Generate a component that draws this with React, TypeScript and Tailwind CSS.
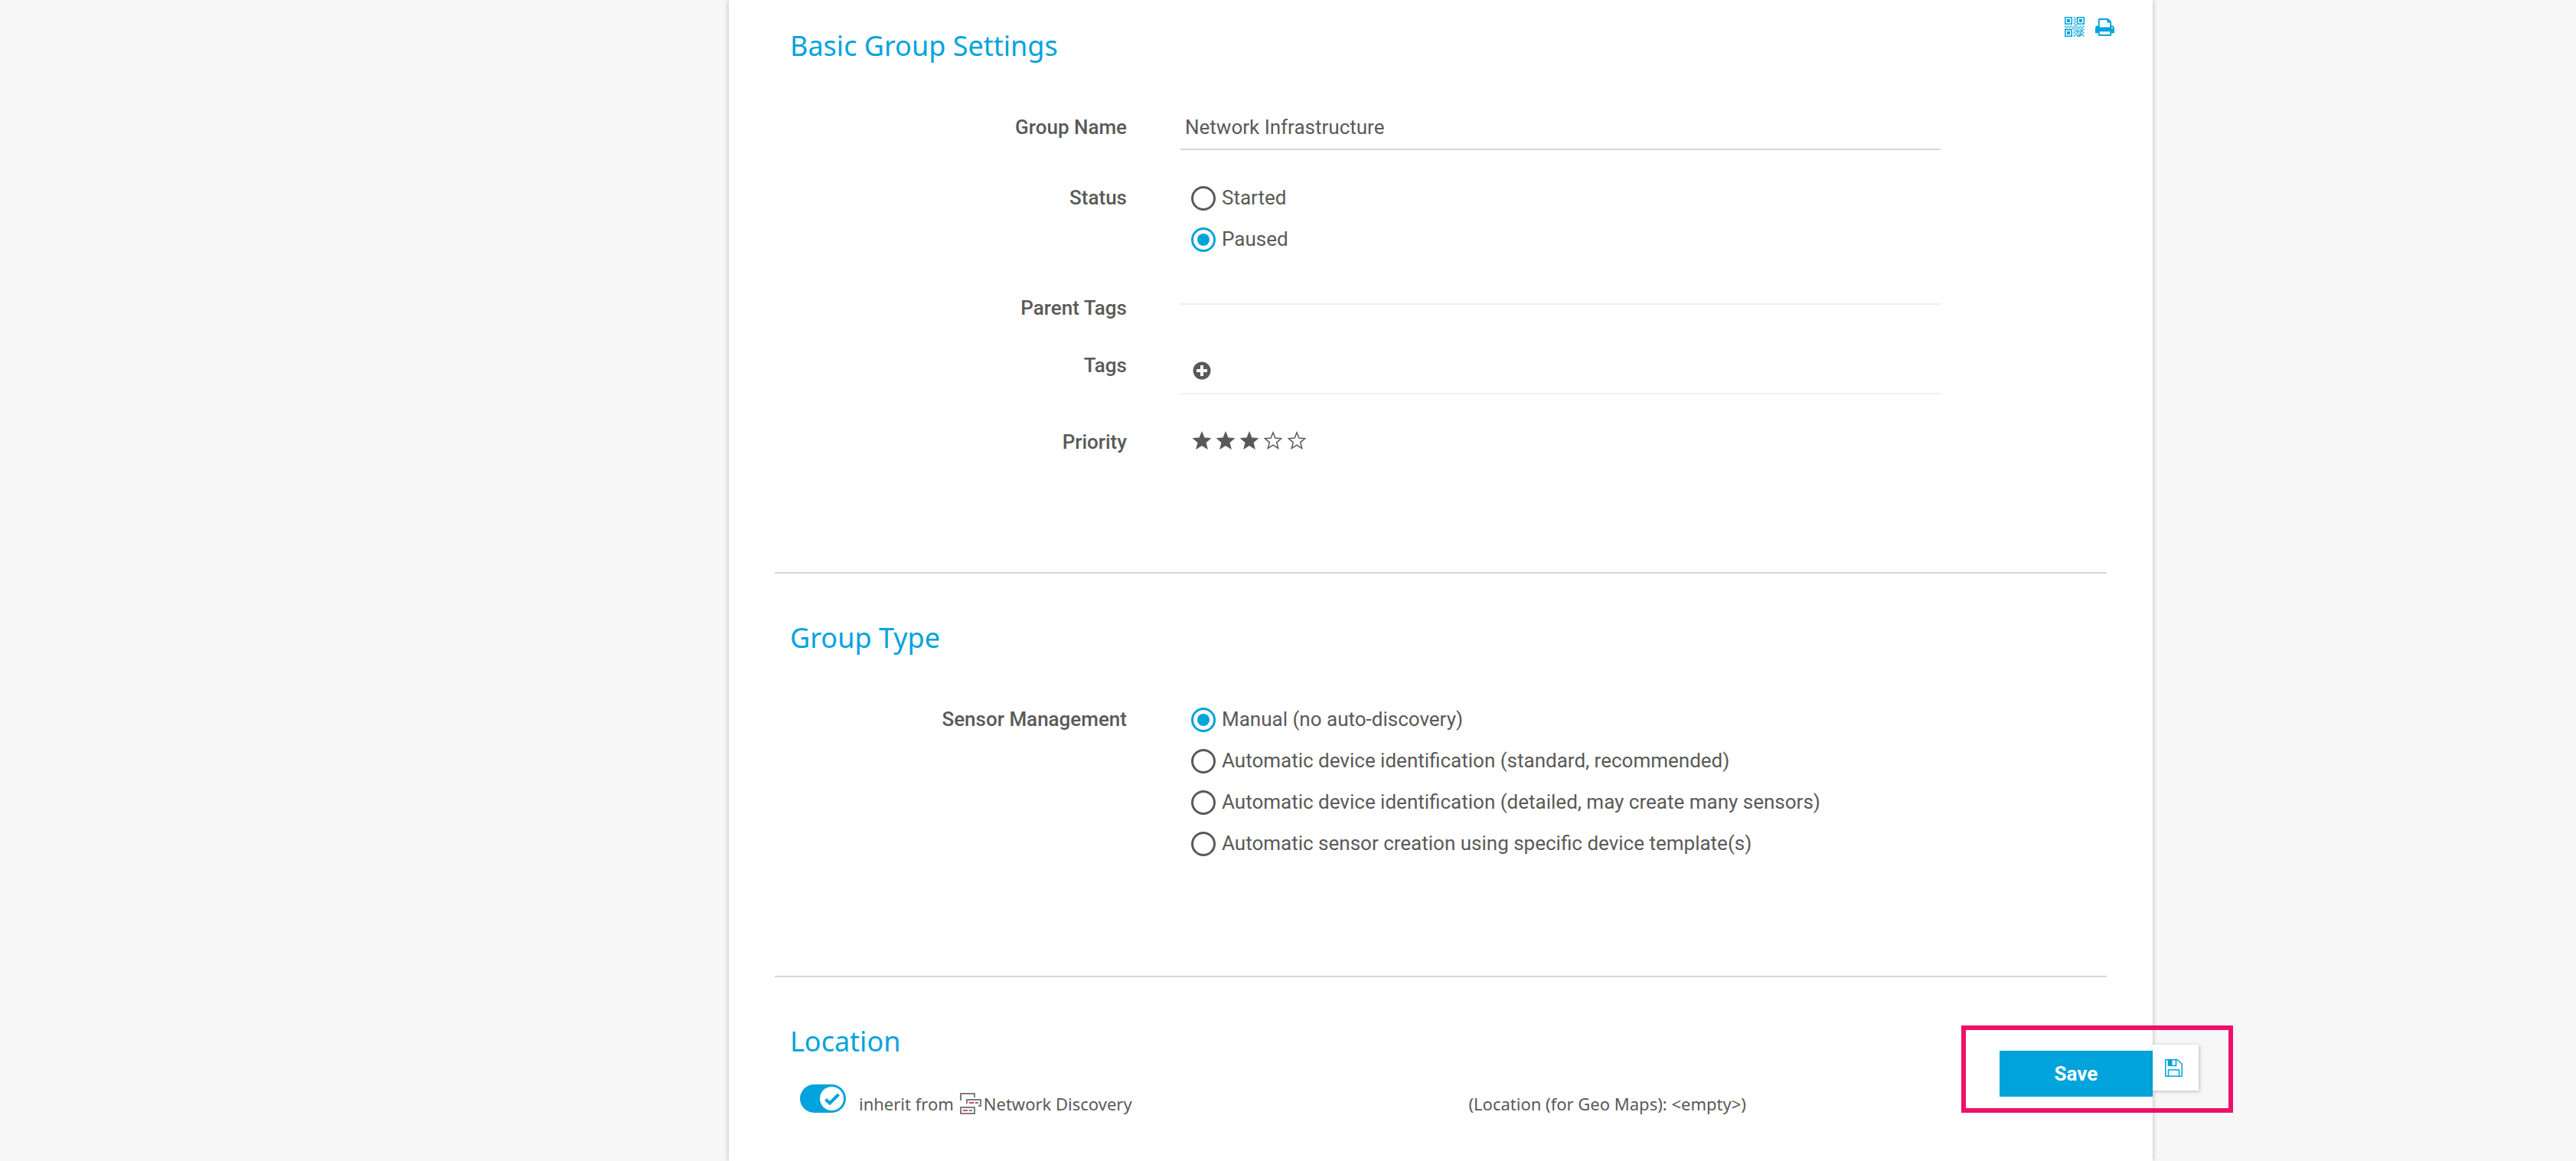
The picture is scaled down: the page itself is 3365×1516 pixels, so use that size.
import { ReactNode, useState } from "react";

function QrIcon() {
  const finders = [
    [0, 0],
    [16, 0],
    [0, 16],
  ];
  const dots: [number, number][] = [];
  for (let y = 0; y < 13; y++) {
    for (let x = 0; x < 13; x++) {
      const column = x > 5 && x < 8 && y < 6;
      const band = y > 5 && y < 8 && x < 13;
      const block = x > 5 && y > 7;
      if ((column || band || block) && (x + y) % 2 === 0) dots.push([x, y]);
    }
  }
  return (
    <svg viewBox="0 0 26 26" className="size-[26px]" aria-hidden="true">
      {finders.map(([x, y]) => (
        <g key={`${x}-${y}`}>
          <rect x={x + 0.75} y={y + 0.75} width="8.5" height="8.5" fill="none" stroke="currentColor" strokeWidth="1.5" />
          <rect x={x + 3} y={y + 3} width="4" height="4" fill="currentColor" />
        </g>
      ))}
      {dots.map(([x, y]) => (
        <rect key={`${x}-${y}`} x={x * 2 - 0.5} y={y * 2 - 0.5} width="2" height="2" fill="currentColor" opacity="0.85" />
      ))}
      <path d="M16 19h2M20 23h3M22 17v3M17 25h3" stroke="currentColor" strokeWidth="1.500" />
    </svg>
  );
}

function PrintIcon() {
  return (
    <svg viewBox="0 128 1664 1536" className="h-[23px] w-[25px]" fill="currentColor" aria-hidden="true">
      <path d="M384 1536h896v-256h-896v256zM384 896h896v-384h-160q-40 0-68-28t-28-68v-160h-640v640zM1536 960q0-26-19-45t-45-19-45 19-19 45 19 45 45 19 45-19 19-45zM1664 960v416q0 13-9.500 22.500t-22.500 9.500h-224v160q0 40-28 68t-68 28h-960q-40 0-68-28t-28-68v-160h-224q-13 0-22.500-9.500t-9.500-22.500v-416q0-79 56.500-135.500t135.500-56.500h64v-544q0-40 28-68t68-28h672q40 0 88 20t76 48l152 152q28 28 48 76t20 88v256h64q79 0 135.500 56.500t56.500 135.500z" />
    </svg>
  );
}

function PlusIcon() {
  return (
    <svg viewBox="0 0 24 24" className="size-6" aria-hidden="true">
      <circle cx="12" cy="12" r="11.500" fill="currentColor" />
      <path d="M12 5v14M5 12h14" stroke="#fff" strokeWidth="4" />
    </svg>
  );
}

function StarIcon({ filled }: { filled: boolean }) {
  return (
    <svg viewBox="0 0 24 24" className="size-6" aria-hidden="true">
      <path
        d="M12 1.800 14.900 9.100 22.700 9.600 16.700 14.600 18.700 22.400 12 18.200 5.300 22.400 7.300 14.600 1.300 9.600 9.100 9.100Z"
        fill={filled ? "currentColor" : "none"}
        stroke="currentColor"
        strokeWidth="1.500"
      />
    </svg>
  );
}

function NetworkIcon() {
  return (
    <svg viewBox="0 0 28 28" className="size-7" aria-hidden="true">
      <g fill="none" stroke="#7d7d80" strokeWidth="2">
        <path d="M1 10V1h18v5" />
        <path d="M9 14V9h18v8h-3" />
        <path d="M1 19h18v8H1z" />
      </g>
      <path d="M12 13h6M4 23h6" stroke="#f0338a" strokeWidth="2" />
      <path d="M20 13h4M12 23h4" stroke="#7d7d80" strokeWidth="2" />
    </svg>
  );
}

function FloppyIcon() {
  return (
    <svg viewBox="0 0 23 23" className="size-[23px]" aria-hidden="true">
      <g fill="none" stroke="currentColor" strokeWidth="1.500" strokeLinejoin="round">
        <path d="M.75 .75h15.500l6 5.500v16H.75z" />
        <path d="M4.500 1v7.500h10V1" />
        <path d="M4.500 22v-8h14v8" />
      </g>
      <path d="M4.500 1h5v7.500h-5z" fill="currentColor" />
    </svg>
  );
}

function Section({ title, first, children }: { title: string; first?: boolean; children: ReactNode }) {
  return (
    <section className={first ? "pt-9 pl-5" : "border-t-2 border-[#d6d6d6] pt-15 pl-5"}>
      <h2 className="font-['Noto_Sans'] text-[36px] leading-12 text-[#00a3dc]">{title}</h2>
      {children}
    </section>
  );
}

const rowClass = "grid grid-cols-[440fr_993fr] gap-x-[70px] pr-[217px]";
const labelClass = "text-right text-[26px] leading-[30px] font-medium";

function RadioList({ name, options, initial }: { name: string; options: string[]; initial: string }) {
  const [value, setValue] = useState(initial);
  return (
    <div role="radiogroup" aria-labelledby={`${name}-label`} className="flex flex-col items-start gap-[22px] pl-[14px]">
      {options.map((option) => (
        <label key={option} className="flex h-8 items-start gap-2 text-[26px] leading-[30px]">
          <input
            type="radio"
            name={name}
            checked={value === option}
            onChange={() => setValue(option)}
            className="grid size-8 appearance-none place-items-center rounded-full border-3 border-[#595a57] checked:border-[#00a3dc] checked:before:size-4 checked:before:rounded-full checked:before:bg-[#00a3dc] checked:before:content-['']"
          />
          {option}
        </label>
      ))}
    </div>
  );
}

export default function App() {
  const [priority, setPriority] = useState(3);
  return (
    <div className="grid min-h-screen grid-cols-[952fr_1860fr_553fr] bg-[#f7f7f7] font-[Roboto,sans-serif] text-[#595a57]">
      <main className="relative col-start-2 bg-white px-15 shadow-[0_0_6px_rgba(0,0,0,0.28)]">
        <div className="absolute top-[22px] right-[50px] flex items-center gap-[14px] text-[#00a3dc]">
          <button type="button" aria-label="Show QR code">
            <QrIcon />
          </button>
          <button type="button" aria-label="Print">
            <PrintIcon />
          </button>
        </div>

        <Section title="Basic Group Settings" first>
          <div className={`${rowClass} mt-[67px]`}>
            <label htmlFor="group-name" className={labelClass}>
              Group Name
            </label>
            <input
              id="group-name"
              defaultValue="Network Infrastructure"
              className="h-[45px] w-full border-b-2 border-[#d6d6d6] pb-[13px] pl-[6px] text-[26px] leading-[30px] outline-none"
            />
          </div>
          <div className={`${rowClass} mt-[47px]`}>
            <span id="status-label" className={labelClass}>
              Status
            </span>
            <RadioList name="status" options={["Started", "Paused"]} initial="Paused" />
          </div>
          <div className={`${rowClass} mt-[58px]`}>
            <span className={labelClass}>Parent Tags</span>
            <div className="h-[11px] border-b-2 border-[#eeeeee]" />
          </div>
          <div className={`${rowClass} mt-[45px]`}>
            <span className={labelClass}>Tags</span>
            <div className="h-[53px] border-b-2 border-[#eeeeee] pt-[10px] pl-4">
              <button type="button" aria-label="Add tag" className="block">
                <PlusIcon />
              </button>
            </div>
          </div>
          <div className={`${rowClass} mt-[47px] pb-[155px]`}>
            <span className={labelClass}>Priority</span>
            <div className="flex items-start gap-[7px] pt-px pl-4">
              {[1, 2, 3, 4, 5].map((n) => (
                <button key={n} type="button" aria-label={`Priority ${n}`} onClick={() => setPriority(n)}>
                  <StarIcon filled={n <= priority} />
                </button>
              ))}
            </div>
          </div>
        </Section>

        <Section title="Group Type">
          <div className={`${rowClass} mt-[67px] pb-[156px]`}>
            <span id="sensor-management-label" className={labelClass}>
              Sensor Management
            </span>
            <RadioList
              name="sensor-management"
              options={[
                "Manual (no auto-discovery)",
                "Automatic device identification (standard, recommended)",
                "Automatic device identification (detailed, may create many sensors)",
                "Automatic sensor creation using specific device template(s)",
              ]}
              initial="Manual (no auto-discovery)"
            />
          </div>
        </Section>

        <Section title="Location">
          <div className="mt-8 grid grid-cols-[874fr_834fr] pl-[13px] font-['Noto_Sans'] text-[22px] leading-8">
            <div className="flex items-start">
              <label className="relative block h-[37px] w-[60px]">
                <input
                  type="checkbox"
                  defaultChecked
                  aria-label="Inherit location"
                  className="peer block h-full w-full appearance-none rounded-full bg-[#8d8d8d] checked:bg-[#00a3dc]"
                />
                <span className="pointer-events-none absolute top-[3px] left-[3px] grid size-[31px] place-items-center rounded-full bg-white text-[#8d8d8d] peer-checked:left-[26px] peer-checked:text-[#00a3dc]">
                  <svg viewBox="0 0 20 16" className="h-4 w-5" aria-hidden="true">
                    <path d="M1.500 8.500 7 13.500 18.500 2" fill="none" stroke="currentColor" strokeWidth="4" />
                  </svg>
                </span>
              </label>
              <p className="flex items-center pt-[9px] pl-[17px]">
                <span>inherit from</span>
                <span className="mr-[3px] ml-2">
                  <NetworkIcon />
                </span>
                <span>Network Discovery</span>
              </p>
            </div>
            <p className="pt-[9px]">(Location (for Geo Maps): &lt;empty&gt;)</p>
          </div>
        </Section>

        <div className="absolute -right-[105px] bottom-[63px] flex h-[114px] w-[355px] items-start border-6 border-[#ef0f6b] pl-11">
          <button type="button" className="mt-[27px] h-15 w-[200px] bg-[#00a3dc] text-[26px] font-bold text-white">
            Save
          </button>
          <button
            type="button"
            aria-label="Save changes"
            className="mt-[19px] flex h-15 w-15 items-center bg-white pl-4 text-[#00a3dc] shadow-[1px_1px_5px_rgba(0,0,0,0.25)]"
          >
            <FloppyIcon />
          </button>
        </div>
      </main>
    </div>
  );
}
